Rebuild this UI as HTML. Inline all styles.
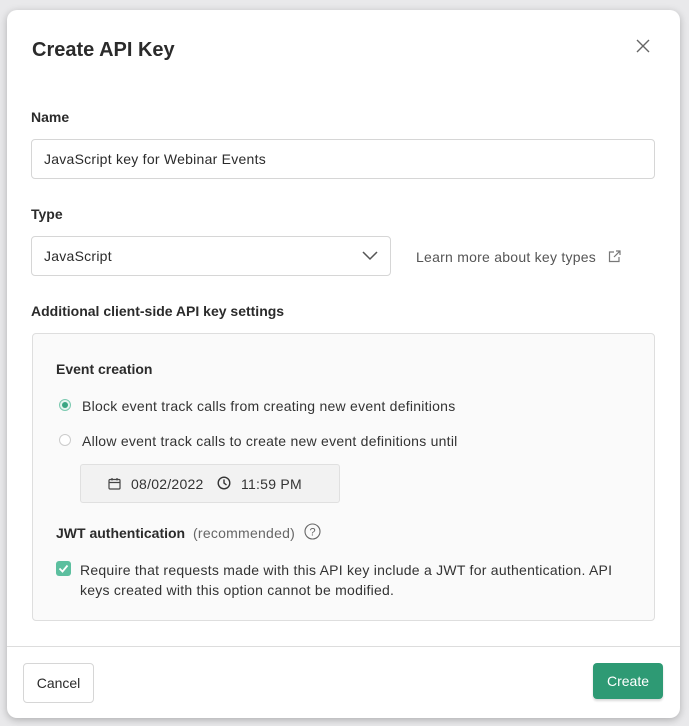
<!DOCTYPE html><html><head><style>
*{box-sizing:border-box;margin:0;padding:0}
body{width:689px;height:726px;background:#e9e9eb;font-family:"Liberation Sans",sans-serif;color:#2b2b2b;position:relative;overflow:hidden}
.m{position:absolute;left:7px;top:10px;width:673px;height:708px;background:#fff;border-radius:10px;box-shadow:0 2px 8px rgba(0,0,0,.25)}
.a{position:absolute;white-space:nowrap}
.in{position:absolute;border:1px solid #d6d6d6;border-radius:4px;background:#fff;font-size:14px;padding-left:12px;display:flex;align-items:center;letter-spacing:.25px}
.lb{font-size:14px;font-weight:bold;color:#2b2b2b}
.t{font-size:14px;color:#333;letter-spacing:.25px}
</style></head><body>
<div class="m">
<div class="a" style="left:25px;top:29px;font-size:20px;font-weight:bold;color:#2b2b2b">Create API Key</div>
<svg class="a" style="left:629px;top:29px" width="14" height="14"><path d="M1 1L13 13M13 1L1 13" stroke="#666" stroke-width="1.4"/></svg>
<div class="a lb" style="left:24px;top:99px">Name</div>
<div class="in" style="left:24px;top:129px;width:624px;height:40px">JavaScript key for Webinar Events</div>
<div class="a lb" style="left:24px;top:196px">Type</div>
<div class="in" style="left:24px;top:226px;width:360px;height:40px">JavaScript
<svg class="a" style="left:330px;top:14px" width="16" height="10"><path d="M1 1L8 8L15 1" stroke="#555" stroke-width="1.5" fill="none"/></svg></div>
<div class="a t" style="left:409px;top:239px;color:#555">Learn more about key types</div>
<svg class="a" style="left:601px;top:240px" width="13" height="13"><path d="M6 2H1.5V11.5H11V7M8 1H12V5M12 1L6 7" stroke="#777" stroke-width="1.2" fill="none"/></svg>
<div class="a lb" style="left:24px;top:293px">Additional client-side API key settings</div>
<div class="a" style="left:25px;top:323px;width:623px;height:288px;background:#fafafa;border:1px solid #dedede;border-radius:4px"></div>
<div class="a lb" style="left:49px;top:351px">Event creation</div>
<div class="a" style="left:52px;top:389px;width:12px;height:12px;border-radius:50%;border:1px solid #7cc9b0;background:#e6f4ef"><div style="margin:2px;width:6px;height:6px;border-radius:50%;background:#3aa582"></div></div>
<div class="a t" style="left:75px;top:388px">Block event track calls from creating new event definitions</div>
<div class="a" style="left:52px;top:424px;width:12px;height:12px;border-radius:50%;border:1px solid #ccc;background:#fff"></div>
<div class="a t" style="left:75px;top:423px">Allow event track calls to create new event definitions until</div>
<div class="a" style="left:73px;top:454px;width:260px;height:39px;background:#f2f2f2;border:1px solid #e0e0e0;border-radius:3px"></div>
<svg class="a" style="left:101px;top:467px" width="13" height="13"><rect x="1" y="2.5" width="11" height="9.5" rx="1" stroke="#444" stroke-width="1.2" fill="none"/><path d="M1 5.5H12M4 1V3.5M9 1V3.5" stroke="#444" stroke-width="1.2"/></svg>
<div class="a t" style="left:124px;top:466px">08/02/2022</div>
<svg class="a" style="left:210px;top:466px" width="14" height="14"><circle cx="7" cy="7" r="5.8" stroke="#333" stroke-width="1.4" fill="none"/><path d="M7 3.5V7L9.5 9" stroke="#333" stroke-width="1.4" fill="none"/></svg>
<div class="a t" style="left:234px;top:466px">11:59 PM</div>
<div class="a lb" style="left:49px;top:515px">JWT authentication <span style="font-weight:normal;color:#666;margin-left:4px;letter-spacing:.25px">(recommended)</span></div>
<svg class="a" style="left:297px;top:513px" width="17" height="17"><circle cx="8.5" cy="8.5" r="7.5" stroke="#666" stroke-width="1.1" fill="none"/><text x="8.5" y="12.5" font-size="11" text-anchor="middle" fill="#666" font-family="Liberation Sans">?</text></svg>
<div class="a" style="left:49px;top:551px;width:15px;height:15px;border-radius:3px;background:#5cbf9f"><svg width="15" height="15"><path d="M3.5 7.5L6.5 10.5L11.5 4.5" stroke="#fff" stroke-width="1.8" fill="none"/></svg></div>
<div class="a t" style="left:73px;top:550px;line-height:20px">Require that requests made with this API key include a JWT for authentication. API<br>keys created with this option cannot be modified.</div>
<div class="a" style="left:0;top:636px;width:673px;border-top:1px solid #ddd"></div>
<div class="a" style="left:16px;top:653px;width:71px;height:40px;border:1px solid #d6d6d6;border-radius:4px;font-size:14px;display:flex;align-items:center;justify-content:center">Cancel</div>
<div class="a" style="left:586px;top:653px;width:70px;height:36px;background:#2e9a74;border-radius:4px;font-size:14px;color:#fff;display:flex;align-items:center;justify-content:center;box-shadow:0 2px 2px rgba(0,0,0,.15)">Create</div>
</div>
</body></html>
